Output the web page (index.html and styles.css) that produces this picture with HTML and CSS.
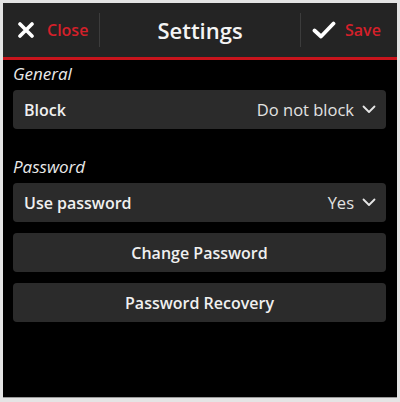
FILE: index.html
```html
<!DOCTYPE html>
<html>
<head>
<meta charset="utf-8">
<link rel="stylesheet" href="styles.css">
</head>
<body>
<div class="frame">
  <header class="bar">
    <div class="action left">
      <svg class="icon-x" width="16" height="16" viewBox="0 0 16 16"><path d="M2 2L14 14M14 2L2 14" stroke="#fff" stroke-width="3.6" stroke-linecap="round"/></svg>
      <span class="action-label">Close</span>
    </div>
    <div class="title">Settings</div>
    <div class="action right">
      <svg class="icon-check" width="24" height="18" viewBox="0 0 24 18"><path d="M2.5 9.5L9 15.5L21.5 2.5" stroke="#fff" stroke-width="3.8" fill="none" stroke-linecap="round" stroke-linejoin="round"/></svg>
      <span class="action-label">Save</span>
    </div>
  </header>
  <main class="content">
    <div class="section-label">General</div>
    <div class="row">
      <span class="row-label">Block</span>
      <span class="row-value">Do not block
        <svg class="chev" width="14" height="9" viewBox="0 0 14 9"><path d="M1.5 1.5L7 7L12.5 1.5" stroke="#e6e6e6" stroke-width="1.8" fill="none" stroke-linecap="round" stroke-linejoin="round"/></svg>
      </span>
    </div>
    <div class="section-label second">Password</div>
    <div class="row">
      <span class="row-label">Use password</span>
      <span class="row-value">Yes
        <svg class="chev" width="14" height="9" viewBox="0 0 14 9"><path d="M1.5 1.5L7 7L12.5 1.5" stroke="#e6e6e6" stroke-width="1.8" fill="none" stroke-linecap="round" stroke-linejoin="round"/></svg>
      </span>
    </div>
    <div class="button">Change Password</div>
    <div class="button">Password Recovery</div>
  </main>
</div>
</body>
</html>
```
FILE: styles.css
```css
html, body {
  margin: 0;
  padding: 0;
}
body {
  background: #e4e4e4;
  width: 400px;
  height: 402px;
  padding-top: 3px;
  padding-left: 3px;
  box-sizing: border-box;
  font-family: "Open Sans", "DejaVu Sans", sans-serif;
  color: #f2f2f2;
}
.frame {
  width: 394px;
  height: 394px;
  background: #000;
  display: flex;
  flex-direction: column;
  border-bottom: 1px solid #9a9a9a;
}
.bar {
  height: 54px;
  background: #242424;
  border-bottom: 3px solid #c8141c;
  display: flex;
  align-items: center;
}
.action {
  display: flex;
  align-items: center;
  height: 34px;
}
.action.left {
  width: 97px;
  padding-left: 15px;
  box-sizing: border-box;
  border-right: 1px solid #3c3c3c;
  gap: 13px;
}
.action.right {
  width: 97px;
  padding-left: 11px;
  box-sizing: border-box;
  border-left: 1px solid #3c3c3c;
  gap: 9px;
}
.action-label {
  color: #d4202a;
  font-size: 16px;
  font-weight: 600;
}
.title {
  flex: 1;
  text-align: center;
  font-size: 22px;
  font-weight: 600;
  color: #f4f4f4;
}
.content {
  padding: 0 11px 0 10px;
  display: flex;
  flex-direction: column;
}
.section-label {
  font-style: italic;
  font-size: 17px;
  color: #eaeaea;
  height: 30px;
  line-height: 28px;
}
.section-label.second {
  margin-top: 13px;
  height: 30px;
}
.row, .button {
  height: 39px;
  background: #2b2b2b;
  border-radius: 4px;
  display: flex;
  align-items: center;
  font-size: 16px;
  font-weight: 600;
  color: #f0f0f0;
  margin-bottom: 11px;
}
.row {
  justify-content: space-between;
  padding: 0 10px 0 11px;
}
.row-value {
  font-weight: 400;
  font-size: 16.5px;
  color: #e2e2e2;
  display: flex;
  align-items: center;
  gap: 8px;
}
.button {
  justify-content: center;
}
```
